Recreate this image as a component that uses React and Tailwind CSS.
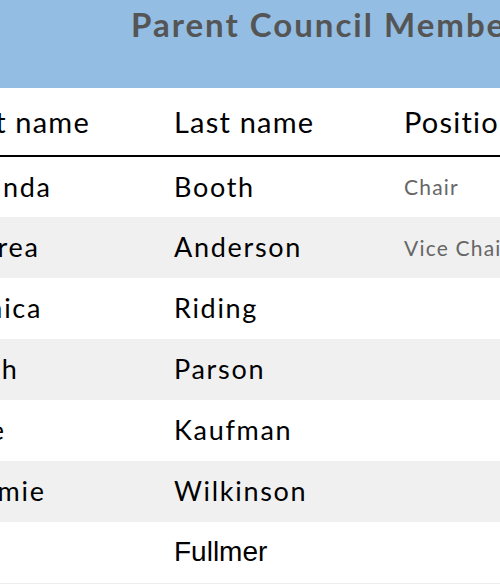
import React from 'react';

const members = [
  { first: 'Amanda', last: 'Booth', position: 'Chair' },
  { first: 'Andrea', last: 'Anderson', position: 'Vice Chair' },
  { first: 'Monica', last: 'Riding', position: '' },
  { first: 'Sarah', last: 'Parson', position: '' },
  { first: 'Julie', last: 'Kaufman', position: '' },
  { first: 'Tammie', last: 'Wilkinson', position: '' },
  { first: 'Kim', last: 'Fullmer', position: '', plain: true },
];

const App = () => {
  return (
    <div className="w-[500px] h-[584px] overflow-hidden bg-white" style={{ fontFamily: 'Lato, "Open Sans", sans-serif' }}>
      <div className="w-[760px] ml-[-56px]">
        {/* Title band */}
        <div className="h-[88px] bg-[#93bde2] pl-[187px] pt-[4px]">
          <h1 className="text-[33px] font-bold text-[#555555] leading-[40px] tracking-[2px] whitespace-nowrap">Parent Council Members</h1>
        </div>

        <table className="w-full table-fixed border-collapse">
          <thead>
            <tr className="h-[68px] border-b-2 border-black">
              <th className="w-[230px] text-left font-normal text-[29px] tracking-[1.2px] text-black align-middle">First name</th>
              <th className="w-[230px] text-left font-normal text-[29px] tracking-[1.2px] text-black align-middle">Last name</th>
              <th className="text-left font-normal text-[29px] tracking-[1.2px] text-black align-middle">Position</th>
            </tr>
          </thead>
          <tbody>
            {members.map((m, i) => (
              <tr key={i} className={`h-[61px] ${i % 2 === 1 ? 'bg-[#f0f0f0]' : 'bg-white'} ${i === members.length - 1 ? 'border-b border-[#eeeeee]' : ''}`}>
                <td className="text-[27px] tracking-[1.7px] text-black whitespace-nowrap">{m.first}</td>
                {m.plain ? (
                  <td className="text-[28px] text-black whitespace-nowrap" style={{ fontFamily: '"Liberation Sans", Arial, sans-serif' }}>
                    {m.last}
                  </td>
                ) : (
                  <td className="text-[27px] tracking-[1.7px] text-black whitespace-nowrap">{m.last}</td>
                )}
                <td className="text-[21px] tracking-[1.2px] text-[#666666] whitespace-nowrap">{m.position}</td>
              </tr>
            ))}
          </tbody>
        </table>
      </div>
    </div>
  );
};

export default App;
